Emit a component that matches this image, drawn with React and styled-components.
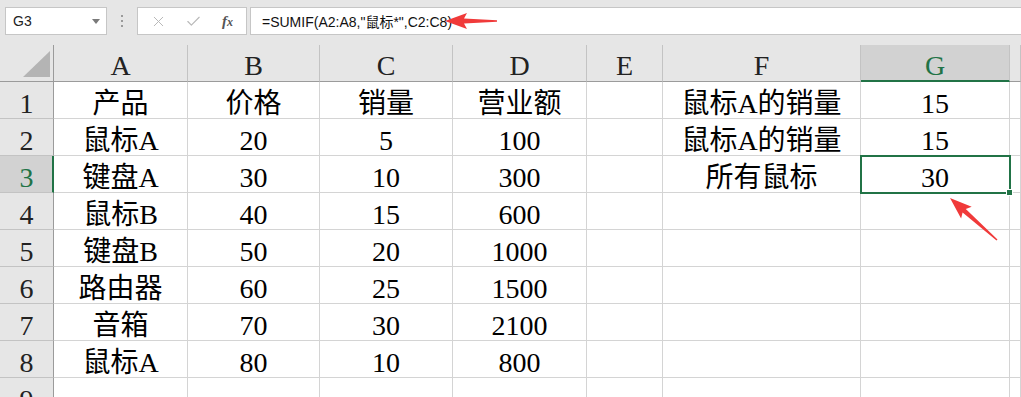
import React from "react";
import styled, { createGlobalStyle } from "styled-components";
import { X, Check } from "lucide-react";

const GREEN = "#217346";
const GRID = "#d4d4d4";
const CELL_FONT = `"Liberation Serif", "Noto Sans CJK SC", serif`;

const GlobalStyle = createGlobalStyle`
  html, body {
    margin: 0;
    padding: 0;
    background: #ffffff;
    overflow: hidden;
  }
  #root {
    position: relative;
    width: 1021px;
    height: 397px;
    overflow: hidden;
  }
`;

const Page = styled.div`
  display: flex;
  flex-direction: column;
  width: 100%;

  & > * {
    flex-shrink: 0;
  }
`;

const Toolbar = styled.div`
  display: flex;
  align-items: flex-start;
  height: 45px;
  padding-top: 7px;
  box-sizing: border-box;
  background: #e6e6e6;
`;

const NameBox = styled.div`
  display: flex;
  align-items: center;
  justify-content: space-between;
  box-sizing: border-box;
  width: 102px;
  height: 28px;
  margin-left: 5px;
  padding: 0 6px 0 7px;
  background: #ffffff;
  border: 1px solid #c6c6c6;
  font: 14px "Liberation Sans", Arial, sans-serif;
  color: #222;
`;

const Caret = styled.span`
  width: 0;
  height: 0;
  border-left: 4px solid transparent;
  border-right: 4px solid transparent;
  border-top: 5px solid #7a7a7a;
  margin-top: 1px;
`;

const Grip = styled.div`
  display: flex;
  flex-direction: column;
  align-items: center;
  justify-content: center;
  gap: 3px;
  width: 30px;
  height: 28px;

  span {
    width: 2px;
    height: 2px;
    background: #9a9a9a;
  }
`;

const FxButtons = styled.div`
  display: flex;
  align-items: center;
  box-sizing: border-box;
  width: 110px;
  height: 28px;
  padding-left: 12px;
  gap: 18px;
  background: #ffffff;
  border: 1px solid #c6c6c6;
  color: #b8b8b8;
`;

const FxLabel = styled.span`
  font: italic bold 15px "Liberation Serif", serif;
  color: #555;
  margin-left: 2px;

  small {
    font-size: 12px;
  }
`;

const FormulaInput = styled.div`
  flex: 1;
  display: flex;
  align-items: center;
  box-sizing: border-box;
  height: 28px;
  margin-left: 3px;
  padding-left: 11px;
  background: #ffffff;
  border: 1px solid #c6c6c6;
  border-right: none;
  font: 14px "Liberation Sans", "Noto Sans CJK SC", sans-serif;
  color: #111;
  white-space: nowrap;
`;

const Sheet = styled.div`
  display: grid;
  grid-template-columns: 54px 134px 132px 133px 134px 76px 198px 149px 1fr;
  grid-template-rows: 37px repeat(9, 37px);
  font-family: ${CELL_FONT};
  font-size: 28px;
  line-height: 28px;
  color: #000;
`;

// cells are bottom-aligned, as in a spreadsheet
const boxText = `
  display: flex;
  align-items: flex-end;
  justify-content: center;
  box-sizing: border-box;
  white-space: nowrap;
`;

const Corner = styled.div`
  position: relative;
  box-sizing: border-box;
  background: #e6e6e6;
  border-right: 1px solid #9b9b9b;
  border-bottom: 1px solid #9b9b9b;

  svg {
    display: block;
  }
`;

const ColHeader = styled.div`
  ${boxText}
  background: ${(p) => (p.$active ? "#d2d2d2" : "#e6e6e6")};
  color: ${(p) => (p.$active ? GREEN : "#222")};
  border-right: 1px solid #c3c3c3;
  border-bottom: ${(p) => (p.$active ? `2px solid ${GREEN}` : "1px solid #9b9b9b")};
  padding-bottom: ${(p) => (p.$active ? "0" : "1px")};
`;

const RowHeader = styled.div`
  ${boxText}
  background: ${(p) => (p.$active ? "#d2d2d2" : "#e6e6e6")};
  color: ${(p) => (p.$active ? GREEN : "#222")};
  border-bottom: 1px solid #c3c3c3;
  border-right: ${(p) => (p.$active ? `2px solid ${GREEN}` : "1px solid #9b9b9b")};
  padding-left: ${(p) => (p.$active ? "1px" : "0")};
`;

const Cell = styled.div`
  ${boxText}
  position: relative;
  border-right: 1px solid ${GRID};
  border-bottom: 1px solid ${GRID};
  ${(p) =>
    p.$selected &&
    `
    z-index: 1;
    outline: 2px solid ${GREEN};
    outline-offset: -1px;
  `}
`;

const FillHandle = styled.span`
  position: absolute;
  right: -4px;
  bottom: -4px;
  width: 5px;
  height: 5px;
  background: ${GREEN};
  border: 1px solid #ffffff;
`;

const Overlay = styled.svg`
  position: absolute;
  left: 0;
  top: 0;
  pointer-events: none;
`;

const columns = ["A", "B", "C", "D", "E", "F", "G", ""];

const rows = [
  ["产品", "价格", "销量", "营业额", "", "鼠标A的销量", "15", ""],
  ["鼠标A", "20", "5", "100", "", "鼠标A的销量", "15", ""],
  ["键盘A", "30", "10", "300", "", "所有鼠标", "30", ""],
  ["鼠标B", "40", "15", "600", "", "", "", ""],
  ["键盘B", "50", "20", "1000", "", "", "", ""],
  ["路由器", "60", "25", "1500", "", "", "", ""],
  ["音箱", "70", "30", "2100", "", "", "", ""],
  ["鼠标A", "80", "10", "800", "", "", "", ""],
  ["", "", "", "", "", "", "", ""],
];

// tapered callout arrow, tip at (x1, y1), tail at (x2, y2)
function arrowPoints(x1, y1, x2, y2) {
  const dx = x2 - x1;
  const dy = y2 - y1;
  const len = Math.hypot(dx, dy);
  const ux = dx / len;
  const uy = dy / len;
  const vx = -uy;
  const vy = ux;
  const local = [
    [0, 0],
    [22, -8],
    [19, -2.4],
    [len, -0.7],
    [len, 0.7],
    [19, 2.4],
    [22, 8],
  ];
  return local
    .map(([u, v]) => `${(x1 + ux * u + vx * v).toFixed(1)},${(y1 + uy * u + vy * v).toFixed(1)}`)
    .join(" ");
}

const App = () => {
  return (
    <>
      <GlobalStyle />
      <Page>
        <Toolbar>
          <NameBox>
            G3
            <Caret />
          </NameBox>
          <Grip>
            <span />
            <span />
            <span />
          </Grip>
          <FxButtons>
            <X size={17} strokeWidth={1.4} />
            <Check size={17} strokeWidth={1.6} />
            <FxLabel>
              f<small>x</small>
            </FxLabel>
          </FxButtons>
          <FormulaInput>=SUMIF(A2:A8,"鼠标*",C2:C8)</FormulaInput>
        </Toolbar>

        <Sheet>
          <Corner>
            <svg width="53" height="36">
              <polygon points="50,6 50,32 23,32" fill="#b4b4b4" />
            </svg>
          </Corner>
          {columns.map((c, i) => (
            <ColHeader key={i} $active={c === "G"}>
              {c}
            </ColHeader>
          ))}

          {rows.map((row, r) => (
            <React.Fragment key={r}>
              <RowHeader $active={r === 2}>{r + 1}</RowHeader>
              {row.map((value, c) => (
                <Cell key={c} $selected={r === 2 && c === 6}>
                  {value}
                  {r === 2 && c === 6 && <FillHandle />}
                </Cell>
              ))}
            </React.Fragment>
          ))}
        </Sheet>
      </Page>

      <Overlay width="1021" height="397">
        <polygon points={arrowPoints(445, 21, 497, 21)} fill="#f03a3a" />
        <polygon points={arrowPoints(950, 198, 997, 240)} fill="#f03a3a" />
      </Overlay>
    </>
  );
};

export default App;
